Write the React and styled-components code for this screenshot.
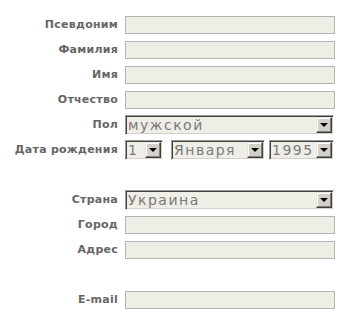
import React from "react";
import styled, { createGlobalStyle } from "styled-components";

const GlobalStyle = createGlobalStyle`
  body {
    margin: 0;
    background: #ffffff;
    font-family: "DejaVu Sans", Verdana, sans-serif;
  }
`;

const Form = styled.form`
  display: grid;
  grid-template-columns: 118px 210px;
  grid-auto-rows: 25px;
  column-gap: 7px;
  padding-top: 12px;
  align-items: center;
`;

const Label = styled.label`
  text-align: right;
  font-size: 11px;
  font-weight: bold;
  letter-spacing: 0.25px;
  color: #666666;
  white-space: nowrap;
`;

const Spacer = styled.div`
  grid-column: 1 / span 2;
`;

const Input = styled.input`
  box-sizing: border-box;
  width: 210px;
  height: 18px;
  margin: 0;
  padding: 0 3px;
  border: 1px solid #b5b5b5;
  background: #eeede6;
  font-family: "DejaVu Sans", Verdana, sans-serif;
  font-size: 12px;
  color: #555555;
  outline: none;
`;

const Fields = styled.div`
  display: flex;
  align-items: center;
`;

const SelectBox = styled.div`
  box-sizing: border-box;
  display: flex;
  width: ${p => p.$width}px;
  height: 20px;
  margin-right: ${p => p.$gap || 0}px;
  border: 1px solid;
  border-color: #9a9a9a #ffffff #ffffff #9a9a9a;
  box-shadow: inset 1px 1px #404040, inset -1px -1px #d4d0c8;
  background: #eeede6;
  padding: 1px;
`;

const NativeSelect = styled.select`
  flex: 1;
  min-width: 0;
  height: 16px;
  appearance: none;
  -webkit-appearance: none;
  border: none;
  background: transparent;
  margin: 0;
  padding: 0 0 0 1px;
  font-family: "DejaVu Sans", Verdana, sans-serif;
  font-size: 14px;
  line-height: 16px;
  letter-spacing: 1.5px;
  color: #7a7a7a;
  outline: none;
`;

const Arrow = styled.span`
  box-sizing: border-box;
  flex: none;
  width: 16px;
  height: 16px;
  display: flex;
  align-items: center;
  justify-content: center;
  background: #d4d0c8;
  border: 1px solid;
  border-color: #e8e6e0 #404040 #404040 #e8e6e0;
  box-shadow: inset -1px -1px #808080, inset 1px 1px #ffffff;

  &::after {
    content: "";
    width: 0;
    height: 0;
    border-left: 4px solid transparent;
    border-right: 4px solid transparent;
    border-top: 4px solid #000000;
    margin-top: 1px;
  }
`;

const Select = ({ width, gap, value, options }) => (
  <SelectBox $width={width} $gap={gap}>
    <NativeSelect defaultValue={value}>
      {options.map(o => (
        <option key={o}>{o}</option>
      ))}
    </NativeSelect>
    <Arrow />
  </SelectBox>
);

const months = [
  "Января", "Февраля", "Марта", "Апреля", "Мая", "Июня",
  "Июля", "Августа", "Сентября", "Октября", "Ноября", "Декабря"
];
const days = Array.from({ length: 31 }, (_, i) => String(i + 1));
const years = Array.from({ length: 60 }, (_, i) => String(1950 + i));

const TextRow = ({ label, type = "text" }) => (
  <>
    <Label>{label}</Label>
    <Input type={type} />
  </>
);

export default function App() {
  return (
    <>
      <GlobalStyle />
      <Form onSubmit={e => e.preventDefault()}>
        <TextRow label="Псевдоним" />
        <TextRow label="Фамилия" />
        <TextRow label="Имя" />
        <TextRow label="Отчество" />

        <Label>Пол</Label>
        <Select width={209} value="мужской" options={["мужской", "женский"]} />

        <Label>Дата рождения</Label>
        <Fields>
          <Select width={38} gap={8} value="1" options={days} />
          <Select width={94} gap={4} value="Января" options={months} />
          <Select width={65} value="1995" options={years} />
        </Fields>

        <Spacer />

        <Label>Страна</Label>
        <Select width={209} value="Украина" options={["Украина", "Россия", "Беларусь"]} />
        <TextRow label="Город" />
        <TextRow label="Адрес" />

        <Spacer />

        <TextRow label="E-mail" type="email" />
      </Form>
    </>
  );
}
